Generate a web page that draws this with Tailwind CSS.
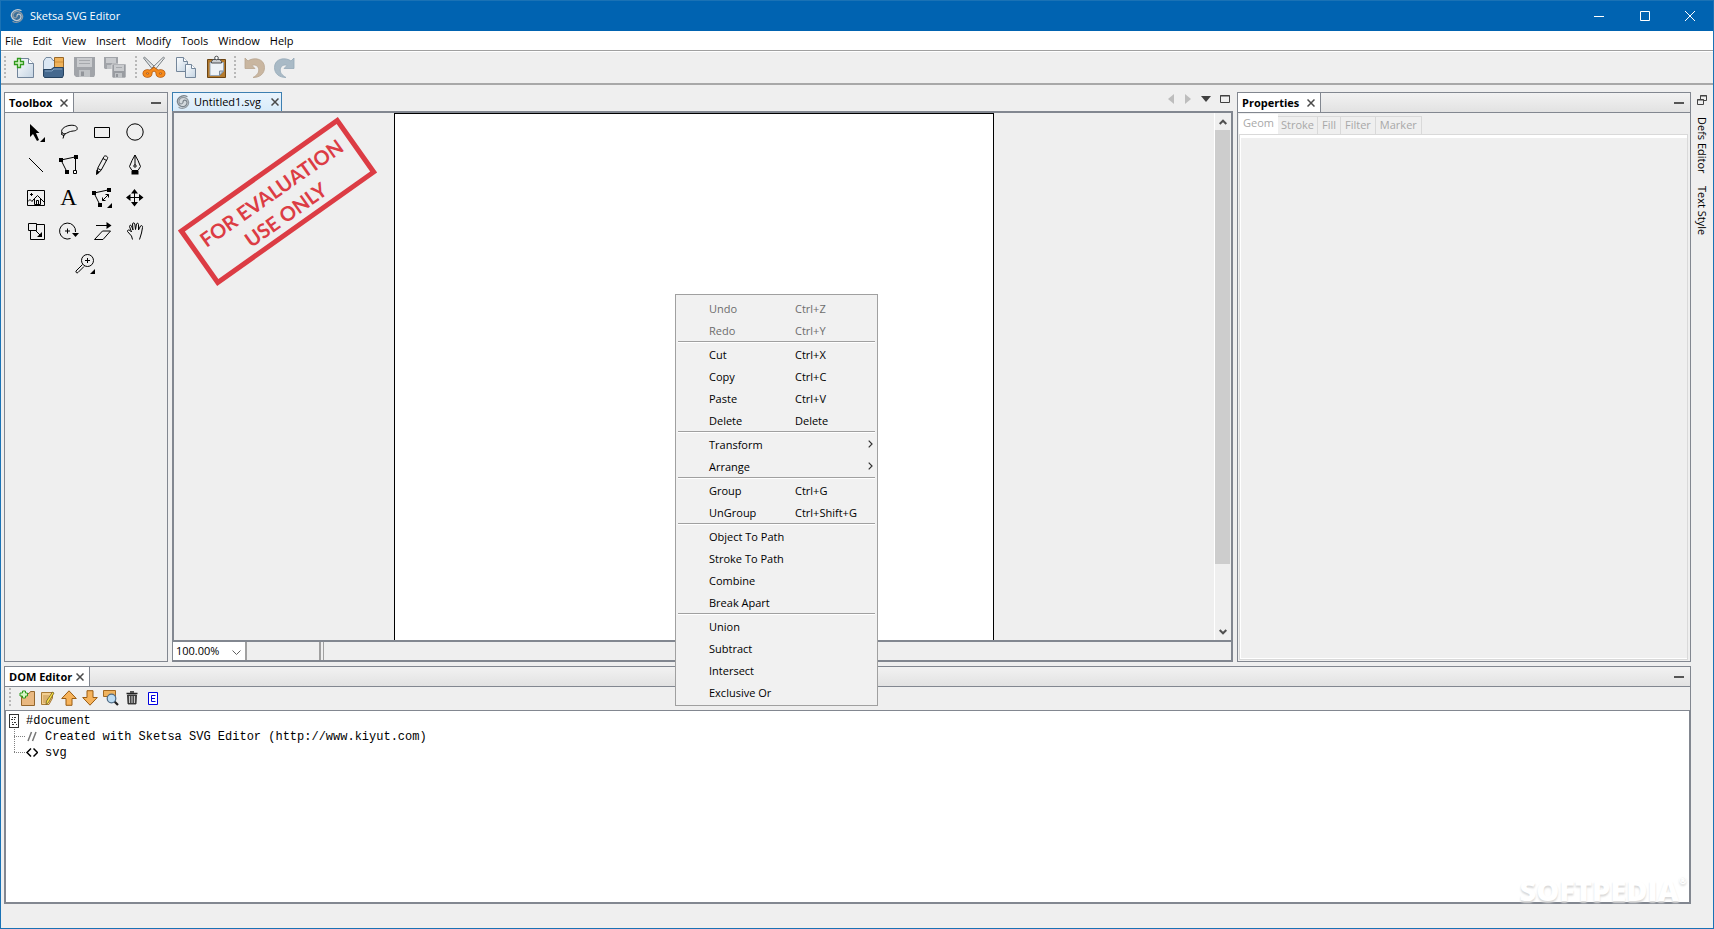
<!DOCTYPE html>
<html lang="en">
<head>
    <meta charset="UTF-8">
    <meta name="viewport" content="width=device-width, initial-scale=1.0">
    <title>Sketsa SVG Editor</title>

    <!-- Tailwind CSS -->
    <script src="https://cdn.jsdelivr.net/npm/@tailwindcss/browser@4"></script>
</head>
<body class="relative flex h-screen flex-col overflow-hidden border border-t-0 border-[#1a72b5] bg-[#efefef] font-['Open_Sans','Noto_Sans',sans-serif] text-[11px] leading-4 text-black">

    <!-- Title bar -->
    <header class="flex h-[31px] shrink-0 items-center border-t border-[#1a72b5] bg-[#0063b1] pl-2 text-white">
        <svg class="size-4" viewBox="0 0 16 16" fill="none" stroke-linecap="round">
            <circle cx="8" cy="8" r="5.500" fill="#3b6f99"/>
            <path d="M8 8C8.200 5.500 11.500 5.500 12 8.200C12.300 11.500 8.800 13.500 5.800 12.200C2 10.500 1 6 4.500 3.200C7 1.300 10 1.300 12 2.500" stroke="#c3ccd3" stroke-width="1.300"/>
            <path d="M8 8C7.800 10.500 4.500 10.500 4 7.800C3.700 4.500 7.200 2.500 10.200 3.800C14 5.500 15 10 11.500 12.800C9 14.700 6 14.700 4 13.500" stroke="#8c9aa6" stroke-width="1.300"/>
        </svg>
        <h1 class="ml-[5px]">Sketsa SVG Editor</h1>
        <div class="ml-auto flex h-full">
            <button aria-label="Minimize" class="flex w-[46px] items-center justify-center">
                <svg class="size-[10px]" viewBox="0 0 10 10" stroke="#fff"><path d="M0 5.500H10"/></svg>
            </button>
            <button aria-label="Maximize" class="flex w-[45px] items-center justify-center">
                <svg class="size-[10px]" viewBox="0 0 10 10" stroke="#fff" fill="none"><path d="M.5 .5H9.500V9.500H.5Z"/></svg>
            </button>
            <button aria-label="Close" class="flex w-[46px] items-center justify-center">
                <svg class="size-[10px]" viewBox="0 0 10 10" stroke="#fff"><path d="M0 0L10 10M10 0L0 10"/></svg>
            </button>
        </div>
    </header>

    <!-- Menu bar -->
    <nav class="flex h-[19px] shrink-0 items-center gap-[10px] bg-white pl-1">
        <button>File</button>
        <button>Edit</button>
        <button>View</button>
        <button>Insert</button>
        <button>Modify</button>
        <button>Tools</button>
        <button>Window</button>
        <button>Help</button>
    </nav>

    <!-- Main toolbar -->
    <div class="flex h-[35px] shrink-0 items-center border-t border-b-2 border-t-[#a0a0a0] border-b-[#a8a8a8] pl-[3px] shadow-[inset_0_1px_0_#fff]">
        <div class="h-[22px] w-[2px] bg-[repeating-linear-gradient(#b8b8b8_0_2px,transparent_2px_4px)]"></div>
        <div class="flex pl-[3px]">
            <button aria-label="New" class="flex h-7 w-[30px] items-center justify-center">
                <svg class="size-6" viewBox="0 0 24 24">
                    <defs>
                        <linearGradient id="paper" x1="0" y1="0" x2="1" y2="1"><stop offset="0" stop-color="#fdfeff"/><stop offset="1" stop-color="#c3d3e2"/></linearGradient>
                    </defs>
                    <path d="M5.500 3.500H16.500L21.500 8.500V22.500H5.500Z" fill="url(#paper)" stroke="#71849a"/>
                    <path d="M16.500 3.500V8.500H21.500" fill="#fff" stroke="#71849a"/>
                    <path d="M5.500 3.500H8.500V6.500H11.500V9.500H8.500V12.500H5.500V9.500H2.500V6.500H5.500Z" fill="#d8f5c8" stroke="#2f9a1c" stroke-width="1.300"/>
                </svg>
            </button>
            <button aria-label="Open" class="flex h-7 w-[30px] items-center justify-center">
                <svg class="size-6" viewBox="0 0 24 24">
                    <path d="M1.500 6L4 2.500H9L11 5.500H20V16H1.500Z" fill="#dbe7f3" stroke="#75899e"/>
                    <path d="M12.500 2.500H21.500V12.500H12.500Z" fill="#efb25a" stroke="#9a6827"/>
                    <path d="M13 7H21" stroke="#d18f37"/>
                    <path d="M1.500 14.500H9L11.500 12.500H21.500V20L20.500 22.500H2.500L1.500 21Z" fill="#46698e" stroke="#24415f"/>
                    <path d="M3 16H10L12 14H20" stroke="#83a3c2" fill="none"/>
                </svg>
            </button>
            <button aria-label="Save" disabled class="flex h-7 w-[30px] items-center justify-center">
                <svg class="size-6" viewBox="0 0 24 24">
                    <path d="M2 2H23V20L22 22H4L2 20Z" fill="#a1a4a9"/>
                    <path d="M5 3H20V12H5Z" fill="#c9cbce"/>
                    <path d="M7 5.500H18M7 8.500H18" stroke="#a6a9ad"/>
                    <path d="M7 15H18V22H7Z" fill="#bfc2c5"/>
                    <path d="M9 16.500H12V21H9Z" fill="#92959a"/>
                </svg>
            </button>
            <button aria-label="Save All" disabled class="flex h-7 w-[30px] items-center justify-center">
                <svg class="size-6" viewBox="0 0 24 24">
                    <path d="M2 2H16V14H3L2 13Z" fill="#a1a4a9"/>
                    <path d="M4 3H14V8H4Z" fill="#c9cbce"/>
                    <path d="M5 10H11V14H5Z" fill="#bfc2c5"/>
                    <path d="M10 9H24V22L23 23H11L10 22Z" fill="#999ca1" stroke="#efefef" stroke-width=".6"/>
                    <path d="M12 10H22V16H12Z" fill="#c9cbce"/>
                    <path d="M14 12.500H20" stroke="#a6a9ad"/>
                    <path d="M13 18H20V23H13Z" fill="#bfc2c5"/>
                    <path d="M14 19H16V22H14Z" fill="#92959a"/>
                </svg>
            </button>
        </div>
        <div class="ml-[6px] h-[22px] w-[2px] bg-[repeating-linear-gradient(#b8b8b8_0_2px,transparent_2px_4px)]"></div>
        <div class="flex pl-[2px]">
            <button aria-label="Cut" class="flex h-7 w-[30px] items-center justify-center">
                <svg class="size-6" viewBox="0 0 24 24">
                    <path d="M1.500 3L2.500 2L14 13L11.500 15.500Z" fill="#dfe3e6" stroke="#6a7075" stroke-width=".9"/>
                    <path d="M22.500 3L21.500 2L10 13L12.500 15.500Z" fill="#eef0f2" stroke="#6a7075" stroke-width=".9"/>
                    <g fill="none" stroke="#b0560c" stroke-width="4"><ellipse cx="5.500" cy="18.500" rx="3" ry="2.300"/><ellipse cx="18.500" cy="18.500" rx="3" ry="2.300"/><path d="M8 17L12 14L16 17"/></g>
                    <g fill="none" stroke="#f58a1c" stroke-width="2.600"><ellipse cx="5.500" cy="18.500" rx="3" ry="2.300"/><ellipse cx="18.500" cy="18.500" rx="3" ry="2.300"/><path d="M8 17L12 14L16 17"/></g>
                </svg>
            </button>
            <button aria-label="Copy" class="ml-[2px] flex h-7 w-[30px] items-center justify-center">
                <svg class="size-6" viewBox="0 0 24 24" fill="url(#paper)" stroke="#74869a">
                    <path d="M2.500 2.500H9.500L13.500 6.500V16.500H2.500Z"/>
                    <path d="M9.500 2.500V6.500H13.500" fill="#fff"/>
                    <path d="M11.500 9.500H17.500L21.500 13.500V22.500H11.500Z"/>
                    <path d="M17.500 9.500V13.500H21.500" fill="#fff"/>
                </svg>
            </button>
            <button aria-label="Paste" class="flex h-7 w-[30px] items-center justify-center">
                <svg class="size-6" viewBox="0 0 24 24">
                    <path d="M3.500 4.500H21.500V22.500H3.500Z" fill="#b37a2e" stroke="#6b4413"/>
                    <path d="M6 7.500H19.500V16L15.500 20.500H6Z" fill="#eef2f7" stroke="#9aa9b8"/>
                    <path d="M19.500 16H15.500V20.500Z" fill="#c7d3df" stroke="#7c8b9b"/>
                    <path d="M7.500 6.500L9 4.500H16L17.500 6.500V8H7.500Z" fill="#c9ccd0" stroke="#4a4d50"/>
                    <circle cx="12.500" cy="3" r="1.800" fill="#fff" stroke="#4a4d50"/>
                </svg>
            </button>
        </div>
        <div class="ml-[3px] h-[22px] w-[2px] bg-[repeating-linear-gradient(#b8b8b8_0_2px,transparent_2px_4px)]"></div>
        <div class="flex pl-[3px]">
            <button aria-label="Undo" disabled class="flex h-7 w-[30px] items-center justify-center">
                <svg class="size-6" viewBox="0 0 24 24">
                    <path d="M3 3L6 6C11 2 22.500 3 22.500 12.500C22.500 19 17.500 22.500 11 22.500C15.500 20 17.500 17 16.500 13.500C15.500 10 12 9.500 10 10.500L13 13.500H3Z" fill="#c9b6a0" stroke="#b7a48f" stroke-width=".8"/>
                </svg>
            </button>
            <button aria-label="Redo" disabled class="flex h-7 w-[30px] items-center justify-center">
                <svg class="size-6" viewBox="0 0 24 24">
                    <path d="M22 3L19 6C14 2 2.500 3 2.500 12.500C2.500 19 7.500 22.500 14 22.500C9.500 20 7.500 17 8.500 13.500C9.500 10 13 9.500 15 10.500L12 13.500H22Z" fill="#a9bac6" stroke="#96a9b7" stroke-width=".8"/>
                </svg>
            </button>
        </div>
    </div>

    <!-- Workspace -->
    <div class="flex min-h-0 flex-1 pt-[7px] pl-[3px]">
        <div class="flex min-w-0 flex-1 flex-col gap-1">
            <main class="flex min-h-0 flex-1 gap-1">

                <!-- Toolbox -->
                <section class="flex w-[164px] shrink-0 flex-col border border-[#828790]">
                    <div class="flex h-5 shrink-0 border-b border-[#828790] bg-linear-to-b from-[#f2f2f2] to-[#e2e2e2]">
                        <div class="flex items-center gap-2 border-r border-[#828790] bg-white pr-[5px] pl-1">
                            <h2 class="font-bold">Toolbox</h2>
                            <button aria-label="Close Toolbox">
                                <svg class="size-2" viewBox="0 0 8 8" stroke="#4a4a4a" stroke-width="1.500"><path d="M.5 .5L7.500 7.500M7.500 .5L.5 7.500"/></svg>
                            </button>
                        </div>
                        <button aria-label="Minimize Toolbox" class="ml-auto flex items-center pr-[6px]"><span class="h-[2px] w-[10px] bg-[#555]"></span></button>
                    </div>
                    <div class="mx-auto flex w-[134px] flex-wrap justify-center pt-[2px] pr-[2px]">
                        <button aria-label="Selection" class="flex size-[33px] items-center justify-center">
                            <svg class="size-6" viewBox="0 0 24 24">
                                <path d="M6 4V17L9 14L13 21L15 20L12 13H15.500Z"/>
                                <path d="M21 17V22H16Z"/>
                            </svg>
                        </button>
                        <button aria-label="Lasso" class="flex size-[33px] items-center justify-center">
                            <svg class="size-6" viewBox="0 0 24 24" fill="none" stroke="#000">
                                <path d="M6 13.500C3 11.500 5 7 12 5.500C18 4.500 21 6.500 20 9.500C19 11.500 14 10.500 11 12.500C9 13.500 7 14.500 6 13.500Z"/>
                                <path d="M5 12L4.500 14.500L7 15.500L8.500 13.500M7 15L6 18.500"/>
                            </svg>
                        </button>
                        <button aria-label="Rectangle" class="flex size-[33px] items-center justify-center">
                            <svg class="size-6" viewBox="0 0 24 24" fill="none" stroke="#000"><path d="M4.500 7.500H19.500V17.500H4.500Z"/></svg>
                        </button>
                        <button aria-label="Ellipse" class="flex size-[33px] items-center justify-center">
                            <svg class="size-6" viewBox="0 0 24 24" fill="none" stroke="#000"><circle cx="12" cy="12" r="8.200"/></svg>
                        </button>
                        <button aria-label="Line" class="flex size-[33px] items-center justify-center">
                            <svg class="size-6" viewBox="0 0 24 24" stroke="#000"><path d="M5 5L19 19"/></svg>
                        </button>
                        <button aria-label="Polygon" class="flex size-[33px] items-center justify-center">
                            <svg class="size-6" viewBox="0 0 24 24" fill="none" stroke="#000">
                                <path d="M4 7L18 4M4 7L10 19M18.500 5V19"/>
                                <path d="M2 5H6V9H2ZM17 2H21V6H17ZM8 17H12V21H8Z" fill="#000" stroke="none"/>
                                <path d="M16.500 17.500H19.500V20.500H16.500Z" fill="#fff"/>
                            </svg>
                        </button>
                        <button aria-label="Pencil" class="flex size-[33px] items-center justify-center">
                            <svg class="size-6" viewBox="0 0 24 24" fill="none" stroke="#000">
                                <path d="M7.500 15.500L14 3.500C15 2 18.500 3.500 17.500 5.500L11 17.500L7 20.500ZM13 5.500L16.500 7.500M8 15.500L11 17.200"/>
                                <path d="M7 17L9 19.500L6.500 21.500Z" fill="#000"/>
                            </svg>
                        </button>
                        <button aria-label="Pen" class="flex size-[33px] items-center justify-center">
                            <svg class="size-6" viewBox="0 0 24 24" fill="none" stroke="#000">
                                <path d="M12 2L9 7.500L6.500 13.500L9 17.500H15L17.500 13.500L15 7.500ZM12 2V12"/>
                                <circle cx="12" cy="13" r="1.200"/>
                                <path d="M8.500 18H15.500V21.500H8.500Z" fill="#000" stroke="none"/>
                            </svg>
                        </button>
                        <button aria-label="Image" class="flex size-[33px] items-center justify-center">
                            <svg class="size-6" viewBox="0 0 24 24" fill="none" stroke="#000">
                                <path d="M3.500 4.500H20.500V19.500H3.500Z"/>
                                <path d="M4 15.500L6 13.500L8 15.500L9 14M17.500 13.500L20 16M9 14L13.500 9.500L18 14M10.500 13V18.500H16.500V13M12.500 18V14.500H14.500V18"/>
                                <path d="M7 7.500H8M6 8.500H9M7 9.500H8"/>
                            </svg>
                        </button>
                        <button aria-label="Text" class="flex size-[33px] items-center justify-center font-['Liberation_Serif',serif] text-[23px] leading-6">A</button>
                        <button aria-label="Edit Path" class="flex size-[33px] items-center justify-center">
                            <svg class="size-6" viewBox="0 0 24 24" fill="none" stroke="#000">
                                <path d="M4 7L18 4M4 7L10 19"/>
                                <path d="M2 5H6V9H2ZM17 2H21V6H17ZM8 17H12V21H8Z" fill="#000" stroke="none"/>
                                <path d="M12.500 14.500L18.500 8.500M15.500 8.500H18.500V11.500M12.500 11.500V14.500H15.500"/>
                                <path d="M22 17V22H17Z" fill="#000" stroke="none"/>
                            </svg>
                        </button>
                        <button aria-label="Move" class="flex size-[33px] items-center justify-center">
                            <svg class="size-6" viewBox="0 0 24 24">
                                <path d="M11.500 4V20M4 11.500H20" stroke="#000"/>
                                <path d="M11.500 3L15 7.500H8ZM11.500 20.500L15 16H8ZM3 11.500L7.500 8V15ZM20.500 11.500L16 8V15Z"/>
                            </svg>
                        </button>
                        <button aria-label="Resize" class="flex size-[33px] items-center justify-center">
                            <svg class="size-6" viewBox="0 0 24 24" fill="none" stroke="#000">
                                <path d="M4.500 4.500H12.500V11.500H4.500ZM12.500 5.500H20.500V20.500H6.500V11.500"/>
                                <path d="M12 12L16 16"/>
                                <path d="M18 13V18H13Z" fill="#000" stroke="none"/>
                            </svg>
                        </button>
                        <button aria-label="Rotate" class="flex size-[33px] items-center justify-center">
                            <svg class="size-6" viewBox="0 0 24 24" fill="none" stroke="#000">
                                <path d="M13.500 19.500A8 8 0 1 1 18.500 13M10.500 9.500V14.500M8 12H13"/>
                                <path d="M15 14H22L18.500 18Z" fill="#000" stroke="none"/>
                            </svg>
                        </button>
                        <button aria-label="Skew" class="flex size-[33px] items-center justify-center">
                            <svg class="size-6" viewBox="0 0 24 24" fill="none" stroke="#000">
                                <path d="M6 6.500H17"/>
                                <path d="M16.500 3L21.500 6.500L16.500 10Z" fill="#000" stroke="none"/>
                                <path d="M4.500 20.500L12.500 12H20.500L13 20.500Z"/>
                            </svg>
                        </button>
                        <button aria-label="Hand" class="flex size-[33px] items-center justify-center">
                            <svg class="size-6" viewBox="0 0 24 24" fill="none" stroke="#000">
                                <path d="M9.500 20.500L8.500 17L4.500 12.500C4 11 6 10.500 7 11.500L8.500 13L6.500 7.500C6.500 6 8 5.800 8.500 7L10 11L9.500 5C9.700 3.500 11.500 3.500 11.800 5L12.500 10.500L13.500 5C14 3.800 15.500 4 15.500 5.500L15.500 11L17.500 7C18.500 6 20 7 19.500 8.500L18.500 14L16.500 20.500"/>
                            </svg>
                        </button>
                        <button aria-label="Zoom" class="flex size-[33px] items-center justify-center">
                            <svg class="size-6" viewBox="0 0 24 24" fill="none" stroke="#000">
                                <circle cx="14.500" cy="8.500" r="6"/>
                                <path d="M14.500 6V11M12 8.500H17"/>
                                <path d="M9.500 12.500L3 19C2.500 20.500 4 21.500 5 20.500L11 14.500"/>
                                <path d="M22 17V22H17Z" fill="#000" stroke="none"/>
                            </svg>
                        </button>
                    </div>
                </section>

                <!-- Document editor -->
                <section class="flex min-w-0 flex-1 flex-col">
                    <div class="flex h-[19px] shrink-0">
                        <div class="flex items-center border border-b-0 border-[#3c7fb1] bg-linear-to-b from-[#eaf4fd] to-[#d8ebfa] px-[2px]">
                            <svg class="size-4" viewBox="0 0 16 16" fill="none" stroke-linecap="round">
                                <circle cx="8" cy="8" r="6" fill="#d3d9dd"/>
                                <path d="M8 8C8.200 5.500 11.500 5.500 12 8.200C12.300 11.500 8.800 13.500 5.800 12.200C2 10.500 1 6 4.500 3.200C7 1.300 10 1.300 12 2.500" stroke="#79838b" stroke-width="1.200"/>
                                <path d="M8 8C7.800 10.500 4.500 10.500 4 7.800C3.700 4.500 7.200 2.500 10.200 3.800C14 5.500 15 10 11.500 12.800C9 14.700 6 14.700 4 13.500" stroke="#8f989f" stroke-width="1.200"/>
                            </svg>
                            <h2 class="ml-[3px]">Untitled1.svg</h2>
                            <button aria-label="Close Untitled1.svg" class="ml-[10px]">
                                <svg class="size-2" viewBox="0 0 8 8" stroke="#4a4a4a" stroke-width="1.500"><path d="M.5 .5L7.500 7.500M7.500 .5L.5 7.500"/></svg>
                            </button>
                        </div>
                        <div class="ml-auto flex items-center gap-[9px] pr-[3px] pb-[5px]">
                            <button aria-label="Previous document" disabled><svg class="h-[10px] w-2" viewBox="0 0 8 10" fill="#bdbdbd"><path d="M7 0V10L1 5Z"/></svg></button>
                            <button aria-label="Next document" disabled><svg class="h-[10px] w-2" viewBox="0 0 8 10" fill="#bdbdbd"><path d="M1 0V10L7 5Z"/></svg></button>
                            <button aria-label="Document list"><svg class="h-[6px] w-[10px]" viewBox="0 0 10 6" fill="#404040"><path d="M0 0H10L5 6Z"/></svg></button>
                            <button aria-label="Maximize editor"><svg class="h-2 w-[10px]" viewBox="0 0 10 8" fill="none" stroke="#404040"><path d="M.5 .5H9.500V7.500H.5ZM0 1H10"/></svg></button>
                        </div>
                    </div>
                    <div class="flex min-h-0 flex-1 border-2 border-[#828790]">
                        <!-- Canvas -->
                        <div class="relative flex min-w-0 flex-1 justify-center overflow-hidden border-r border-white">
                            <div class="w-[600px] shrink-0 border border-b-0 border-black bg-white"></div>
                            <svg class="absolute top-0 left-0 h-[176px] w-[210px]" viewBox="0 0 210 176" font-family="Lato, sans-serif" font-weight="700" font-size="20" fill="#dc3c44" text-anchor="middle">
                                <g transform="translate(103.500 88.500) rotate(-35.300)">
                                    <rect x="-95.500" y="-31.500" width="191" height="63" fill="none" stroke="#dc3c44" stroke-width="5"/>
                                    <text x="0" y="-3">FOR EVALUATION</text>
                                    <text x="-1" y="23">USE ONLY</text>
                                </g>
                            </svg>
                        </div>
                        <div class="flex w-4 shrink-0 flex-col items-center">
                            <button aria-label="Scroll up" class="flex h-[17px] w-full shrink-0 items-center justify-center"><svg class="h-[6px] w-2" viewBox="0 0 8 6" fill="none" stroke="#505050" stroke-width="2"><path d="M.7 5L4 1.700L7.300 5"/></svg></button>
                            <div class="min-h-0 w-full flex-1"><div class="h-[88%] w-[15px] bg-[#cdcdcd]"></div></div>
                            <button aria-label="Scroll down" class="flex h-[17px] w-full shrink-0 items-center justify-center"><svg class="h-[6px] w-2" viewBox="0 0 8 6" fill="none" stroke="#505050" stroke-width="2"><path d="M.7 1L4 4.300L7.300 1"/></svg></button>
                        </div>
                    </div>
                    <!-- Status bar -->
                    <div class="flex h-5 shrink-0 border-r-2 border-b-2 border-l border-[#828790]">
                        <div class="relative w-[72px] bg-white">
                            <select aria-label="Zoom level" class="h-full w-full appearance-none pl-[3px]">
                                <option>100.00%</option>
                            </select>
                            <svg class="pointer-events-none absolute top-2 right-1 h-[6px] w-[9px]" viewBox="0 0 9 6" fill="none" stroke="#606060"><path d="M.5 .5L4.500 4.500L8.500 .5"/></svg>
                        </div>
                        <div class="w-[76px] border-x-2 border-[#a0a0a0]"></div>
                        <div class="ml-[2px] flex-1 border-l border-[#a0a0a0]"></div>
                    </div>
                </section>

                <!-- Properties -->
                <section class="flex w-[454px] shrink-0 flex-col border border-[#828790]">
                    <div class="flex h-5 shrink-0 border-b border-[#828790] bg-linear-to-b from-[#f2f2f2] to-[#e2e2e2]">
                        <div class="flex items-center gap-2 border-r border-[#828790] bg-white pr-[5px] pl-1">
                            <h2 class="font-bold">Properties</h2>
                            <button aria-label="Close Properties">
                                <svg class="size-2" viewBox="0 0 8 8" stroke="#4a4a4a" stroke-width="1.500"><path d="M.5 .5L7.500 7.500M7.500 .5L.5 7.500"/></svg>
                            </button>
                        </div>
                        <button aria-label="Minimize Properties" class="ml-auto flex items-center pr-[6px]"><span class="h-[2px] w-[10px] bg-[#555]"></span></button>
                    </div>
                    <div class="mt-px flex h-5 shrink-0 items-end pl-px text-[#a8a8a8]">
                        <button disabled class="h-5 bg-white px-1 pb-[3px]">Geom</button>
                        <button disabled class="h-[18px] border-t border-r border-[#d9d9d9] px-[3px] pb-px">Stroke</button>
                        <button disabled class="h-[18px] border-t border-r border-[#d9d9d9] px-1 pb-px">Fill</button>
                        <button disabled class="h-[18px] border-t border-r border-[#d9d9d9] px-1 pb-px">Filter</button>
                        <button disabled class="h-[18px] border-t border-r border-[#d9d9d9] px-1 pb-px">Marker</button>
                    </div>
                    <div class="mr-[2px] mb-px ml-px flex-1 border border-[#d9d9d9] shadow-[inset_0_3px_0_#fff,inset_1px_-1px_0_#fff]"></div>
                </section>
            </main>

            <!-- DOM Editor -->
            <section class="flex h-[238px] shrink-0 flex-col border border-[#828790]">
                <div class="flex h-5 shrink-0 border-b border-[#828790] bg-linear-to-b from-[#f2f2f2] to-[#e2e2e2]">
                    <div class="flex items-center gap-1 border-r border-[#828790] bg-white pr-[5px] pl-1">
                        <h2 class="font-bold">DOM Editor</h2>
                        <button aria-label="Close DOM Editor">
                            <svg class="size-2" viewBox="0 0 8 8" stroke="#4a4a4a" stroke-width="1.500"><path d="M.5 .5L7.500 7.500M7.500 .5L.5 7.500"/></svg>
                        </button>
                    </div>
                    <button aria-label="Minimize DOM Editor" class="ml-auto flex items-center pr-[6px]"><span class="h-[2px] w-[10px] bg-[#555]"></span></button>
                </div>
                <div class="flex h-[23px] shrink-0 items-center pb-px pl-1">
                    <div class="h-5 w-[2px] bg-[repeating-linear-gradient(#b8b8b8_0_2px,transparent_2px_4px)]"></div>
                    <div class="flex pl-[5px]">
                        <button aria-label="New Node" class="flex w-[21px] justify-center">
                            <svg class="size-4" viewBox="0 0 16 16">
                                <path d="M2.500 3.500H10L11.500 1.500H15.500V15.500H2.500Z" fill="#e9b880" stroke="#94662b"/>
                                <path d="M3.500 1H6.500V3H8.500V6H6.500V8H3.500V6H1V3H3.500Z" fill="#d9f6c8" stroke="#2f9a1c"/>
                            </svg>
                        </button>
                        <button aria-label="Edit Node" class="flex w-[21px] justify-center">
                            <svg class="size-4" viewBox="0 0 16 16">
                                <path d="M1.500 2.500H12.500V8L9 14.500H1.500Z" fill="#f3cf90" stroke="#a87a36"/>
                                <path d="M3 6H9M3 8H8M3 10H7M3 12H6" stroke="#c39450"/>
                                <path d="M12.500 2L14 3L8.500 12.500L6 14.500L6.500 11Z" fill="#f9df3f" stroke="#6c5a20" stroke-width=".8"/>
                            </svg>
                        </button>
                        <button aria-label="Move Up" class="flex w-[21px] justify-center">
                            <svg class="size-4" viewBox="0 0 16 16"><path d="M8 .8L15.300 8.500H11V15.300H5V8.500H.7Z" fill="#f6b35b" stroke="#9a5c12"/></svg>
                        </button>
                        <button aria-label="Move Down" class="flex w-[21px] justify-center">
                            <svg class="size-4" viewBox="0 0 16 16"><path d="M8 15.200L15.300 7.500H11V.7H5V7.500H.7Z" fill="#f6b35b" stroke="#9a5c12"/></svg>
                        </button>
                        <button aria-label="Find Node" class="flex w-[21px] justify-center">
                            <svg class="size-4" viewBox="0 0 16 16">
                                <path d="M.5 .5H12.500V6.500H.5Z" fill="#efb35e" stroke="#a36a22"/>
                                <path d="M11.500 11.500L15 15" stroke="#222" stroke-width="2.200"/>
                                <circle cx="8.500" cy="8.500" r="4.300" fill="#bcdcf3" stroke="#4e6a84" stroke-width="1.200"/>
                            </svg>
                        </button>
                        <button aria-label="Delete Node" class="flex w-[21px] justify-center">
                            <svg class="size-4" viewBox="0 0 16 16">
                                <path d="M3.500 5H12.500L12 14H4Z" fill="#4a4a4a" stroke="#222" stroke-width=".8"/>
                                <path d="M2.500 3.500H13.500M6 1.800H10" stroke="#222" stroke-width="1.300"/>
                                <path d="M5.500 6V13M8 6V13M10.500 6V13" stroke="#c8c8c8"/>
                            </svg>
                        </button>
                        <button aria-label="Entity" class="flex w-[21px] justify-center">
                            <svg class="size-4" viewBox="0 0 16 16" fill="#fff" stroke="#0000e0"><path d="M3.500 2.500H12.500V14.500H3.500Z"/><path d="M10.500 5.500H6.500V11.500H10.500M6.500 8.500H10" fill="none"/></svg>
                        </button>
                    </div>
                </div>
                <div class="flex-1 border border-[#828790] bg-white font-['Liberation_Mono',monospace] text-[12px]">
                    <ul class="pt-[2px] pl-[3px]">
                        <li class="flex h-4 items-center">
                            <svg class="mb-px h-4 w-[10px]" viewBox="0 0 10 16" fill="none" stroke="#333" shape-rendering="crispEdges"><path d="M.5 1.500H9.500V14.500H.5Z"/><path d="M3 4.500H4M5 4.500H7M2 6.500H4M5 6.500H6M3 9.500H4M5 9.500H7M3 11.500H5M7 11.500H8"/></svg>
                            <span class="ml-[7px]">#document</span>
                        </li>
                        <li class="flex h-4 items-center">
                            <svg class="ml-[5px] h-4 w-6" viewBox="0 0 24 16" fill="none"><path d="M.5 0V16M0 7.500H11" stroke="#808080" stroke-dasharray="1 1"/><path d="M14 12L17.500 3M18.500 12L22 3" stroke="#777" stroke-width="1.500"/></svg>
                            <span class="ml-[7px]">Created with Sketsa SVG Editor (http://www.kiyut.com)</span>
                        </li>
                        <li class="flex h-4 items-center">
                            <svg class="ml-[5px] h-4 w-6" viewBox="0 0 24 16" fill="none"><path d="M.5 0V8M0 7.500H11" stroke="#808080" stroke-dasharray="1 1"/><path d="M17 3.500L13 7.500L17 11.500M19.500 3.500L23.500 7.500L19.500 11.500" stroke="#000" stroke-width="1.500"/></svg>
                            <span class="ml-[7px]">svg</span>
                        </li>
                    </ul>
                </div>
            </section>
        </div>

        <!-- Minimized panels -->
        <aside class="flex w-[22px] shrink-0 flex-col items-center gap-3 pt-[3px]">
            <button aria-label="Restore panels">
                <svg class="size-[10px]" viewBox="0 0 10 10" fill="none" stroke="#444"><path d="M3.500 .5H9.500V5.500H6.500M3.500 4V.5M3 1H10M.5 4.500H6.500V9.500H.5ZM0 5H7"/></svg>
            </button>
            <button class="[writing-mode:vertical-rl]">Defs Editor</button>
            <button class="[writing-mode:vertical-rl]">Text Style</button>
        </aside>
    </div>
    <footer class="h-6 shrink-0"></footer>

    <div aria-hidden="true" class="pointer-events-none absolute right-[26px] bottom-[22px] flex text-[29px] leading-8 font-extrabold text-white [text-shadow:0_2px_2px_#d8d8d8]">SOFTPEDIA<span class="text-[10px] leading-3">®</span></div>

    <!-- Context menu -->
    <div role="menu" class="absolute top-[294px] left-[674px] flex w-[203px] flex-col border border-[#a0a0a0] bg-[#f1f1f1] p-[2px]">
        <button role="menuitem" disabled class="grid h-[22px] grid-cols-[86px_1fr] items-center pt-[2px] pl-[31px] text-left text-[#6d6d6d]"><span>Undo</span><span>Ctrl+Z</span></button>
        <button role="menuitem" disabled class="grid h-[22px] grid-cols-[86px_1fr] items-center pt-[2px] pl-[31px] text-left text-[#6d6d6d]"><span>Redo</span><span>Ctrl+Y</span></button>
        <hr class="h-[2px] border-t border-[#a0a0a0] bg-white">
        <button role="menuitem" class="grid h-[22px] grid-cols-[86px_1fr] items-center pt-[2px] pl-[31px] text-left"><span>Cut</span><span>Ctrl+X</span></button>
        <button role="menuitem" class="grid h-[22px] grid-cols-[86px_1fr] items-center pt-[2px] pl-[31px] text-left"><span>Copy</span><span>Ctrl+C</span></button>
        <button role="menuitem" class="grid h-[22px] grid-cols-[86px_1fr] items-center pt-[2px] pl-[31px] text-left"><span>Paste</span><span>Ctrl+V</span></button>
        <button role="menuitem" class="grid h-[22px] grid-cols-[86px_1fr] items-center pt-[2px] pl-[31px] text-left"><span>Delete</span><span>Delete</span></button>
        <hr class="h-[2px] border-t border-[#a0a0a0] bg-white">
        <button role="menuitem" class="flex h-[22px] items-center justify-between pt-[2px] pr-[2px] pl-[31px]"><span>Transform</span><svg class="mb-[2px] h-2 w-[5px]" viewBox="0 0 5 8" fill="none" stroke="#333" stroke-width="1.200"><path d="M.7 .7L4 4L.7 7.300"/></svg></button>
        <button role="menuitem" class="flex h-[22px] items-center justify-between pt-[2px] pr-[2px] pl-[31px]"><span>Arrange</span><svg class="mb-[2px] h-2 w-[5px]" viewBox="0 0 5 8" fill="none" stroke="#333" stroke-width="1.200"><path d="M.7 .7L4 4L.7 7.300"/></svg></button>
        <hr class="h-[2px] border-t border-[#a0a0a0] bg-white">
        <button role="menuitem" class="grid h-[22px] grid-cols-[86px_1fr] items-center pt-[2px] pl-[31px] text-left"><span>Group</span><span>Ctrl+G</span></button>
        <button role="menuitem" class="grid h-[22px] grid-cols-[86px_1fr] items-center pt-[2px] pl-[31px] text-left"><span>UnGroup</span><span>Ctrl+Shift+G</span></button>
        <hr class="h-[2px] border-t border-[#a0a0a0] bg-white">
        <button role="menuitem" class="h-[22px] pt-[2px] pl-[31px] text-left">Object To Path</button>
        <button role="menuitem" class="h-[22px] pt-[2px] pl-[31px] text-left">Stroke To Path</button>
        <button role="menuitem" class="h-[22px] pt-[2px] pl-[31px] text-left">Combine</button>
        <button role="menuitem" class="h-[22px] pt-[2px] pl-[31px] text-left">Break Apart</button>
        <hr class="h-[2px] border-t border-[#a0a0a0] bg-white">
        <button role="menuitem" class="h-[22px] pt-[2px] pl-[31px] text-left">Union</button>
        <button role="menuitem" class="h-[22px] pt-[2px] pl-[31px] text-left">Subtract</button>
        <button role="menuitem" class="h-[22px] pt-[2px] pl-[31px] text-left">Intersect</button>
        <button role="menuitem" class="h-[22px] pt-[2px] pl-[31px] text-left">Exclusive Or</button>
    </div>

</body>
</html>
